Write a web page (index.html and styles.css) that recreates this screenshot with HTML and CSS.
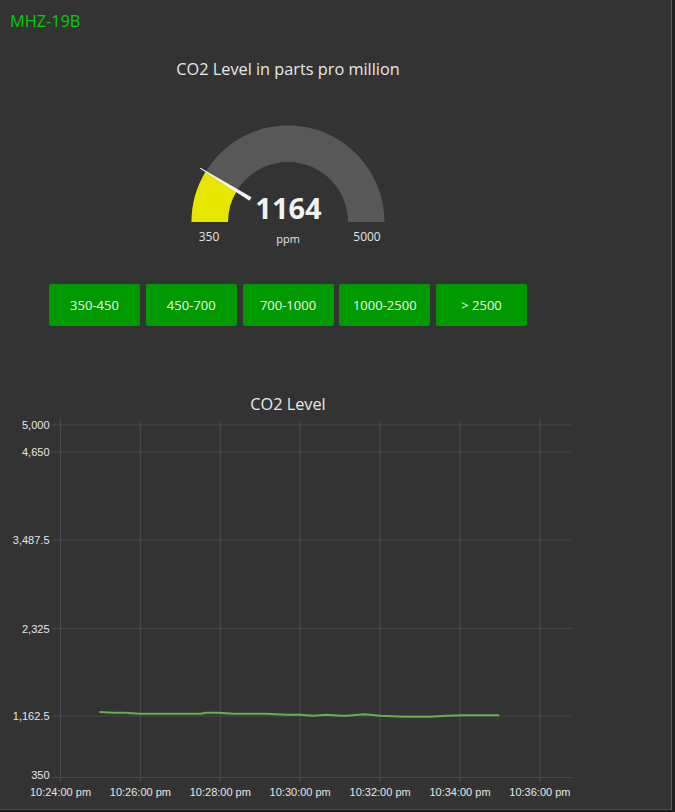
FILE: index.html
```html
<!DOCTYPE html>
<html lang="en">
<head>
<meta charset="utf-8">
<title>MHZ-19B</title>
<link rel="stylesheet" href="styles.css">
</head>
<body>
<div class="page">
  <header class="header">MHZ-19B</header>
  <main class="column">
    <section class="gauge-card">
      <h2 class="card-title gauge-title">CO2 Level in parts pro million</h2>
      <svg class="gauge" width="220" height="205" viewBox="0 0 220 205">
        <path d="M 13.5 143 A 96.5 96.5 0 0 1 206.5 143 L 170 143 A 60 60 0 0 0 50 143 Z" fill="#585858"/>
        <path d="M 13.5 143 A 96.5 96.5 0 0 1 27.72 92.58 L 58.84 111.65 A 60 60 0 0 0 50 143 Z" fill="#e6e600"/>
        <polygon points="22.44,88.75 73.54,118.31 71.45,121.72 21.92,89.61" fill="#f4f4f4"/>
        <text class="g-value" x="110.5" y="140" text-anchor="middle">1164</text>
        <text class="g-limit" x="31" y="162" text-anchor="middle">350</text>
        <text class="g-limit" x="189" y="162" text-anchor="middle">5000</text>
        <text class="g-unit" x="110" y="163.5" text-anchor="middle">ppm</text>
      </svg>
      <div class="buttons">
        <button class="range-btn">350-450</button>
        <button class="range-btn">450-700</button>
        <button class="range-btn">700-1000</button>
        <button class="range-btn">1000-2500</button>
        <button class="range-btn">&gt; 2500</button>
      </div>
    </section>
    <section class="chart-card">
      <h2 class="card-title chart-title">CO2 Level</h2>
      <svg class="chart" width="576" height="395" viewBox="0 0 576 395">
        <g class="grid">
          <line x1="52" y1="11" x2="571" y2="11"/>
          <line x1="52" y1="38" x2="571" y2="38"/>
          <line x1="52" y1="126" x2="571" y2="126"/>
          <line x1="52" y1="214.5" x2="571" y2="214.5"/>
          <line x1="52" y1="302" x2="571" y2="302"/>
          <line x1="52" y1="363.5" x2="571" y2="363.5"/>
          <line x1="60.5" y1="6" x2="60.5" y2="368"/>
          <line x1="140.4" y1="6" x2="140.4" y2="368"/>
          <line x1="220.3" y1="6" x2="220.3" y2="368"/>
          <line x1="300.2" y1="6" x2="300.2" y2="368"/>
          <line x1="380.1" y1="6" x2="380.1" y2="368"/>
          <line x1="460" y1="6" x2="460" y2="368"/>
          <line x1="539.9" y1="6" x2="539.9" y2="368"/>
        </g>
        <g class="y-labels">
          <text x="49.5" y="14.8">5,000</text>
          <text x="49.5" y="42">4,650</text>
          <text x="49.5" y="130">3,487.5</text>
          <text x="49.5" y="218.5">2,325</text>
          <text x="49.5" y="306">1,162.5</text>
          <text x="49.5" y="365">350</text>
        </g>
        <g class="x-labels">
          <text x="60.5" y="382.3">10:24:00 pm</text>
          <text x="140.4" y="382.3">10:26:00 pm</text>
          <text x="220.3" y="382.3">10:28:00 pm</text>
          <text x="300.2" y="382.3">10:30:00 pm</text>
          <text x="380.1" y="382.3">10:32:00 pm</text>
          <text x="460" y="382.3">10:34:00 pm</text>
          <text x="539.9" y="382.3">10:36:00 pm</text>
        </g>
        <polyline class="series" points="99.3,298 113.3,298.7 125,298.7 140,299.7 200,299.7 206.7,298.7 218.3,298.7 233.3,299.7 266.7,299.7 286.7,300.7 300,300.7 313.3,301.7 326.7,300.7 340,301.7 346.7,301.7 365,300.3 380,301.7 403.3,302.7 430,302.7 446.7,301.7 463.3,301.3 499.3,301.3"/>
      </svg>
    </section>
  </main>
</div>
</body>
</html>
```
FILE: styles.css
```css
html {
  background: #1e1e1e;
}
body {
  margin: 0;
  font-family: "Open Sans", "Noto Sans", sans-serif;
}
.page {
  width: 672px;
  height: 810px;
  box-sizing: border-box;
  background: #333333;
  border-right: 1px solid #5e5e5e;
  border-bottom: 1px solid #4a4a4a;
  overflow: hidden;
}
.header {
  padding: 11px 10px 0;
  height: 20px;
  line-height: 20px;
  font-size: 16.3px;
  color: #00cf00;
}
.column {
  width: 576px;
  display: flex;
  flex-direction: column;
}
.card-title {
  margin: 0;
  font-weight: normal;
  font-size: 16.3px;
  line-height: 20px;
  color: #e8e8e8;
  text-align: center;
}
.gauge-card {
  display: flex;
  flex-direction: column;
  align-items: center;
  padding-top: 28px;
}
.gauge {
  display: block;
}
.g-value {
  font-family: "Open Sans", sans-serif;
  font-weight: bold;
  font-size: 29px;
  fill: #f2f2f2;
}
.g-limit {
  font-family: "Open Sans", sans-serif;
  font-size: 12px;
  fill: #e4e4e4;
}
.g-unit {
  font-family: "Open Sans", sans-serif;
  font-size: 11px;
  fill: #e4e4e4;
}
.buttons {
  display: flex;
  gap: 5.75px;
  justify-content: center;
}
.range-btn {
  width: 91px;
  height: 42px;
  border: none;
  border-radius: 2px;
  background: #009a00;
  color: #eef8ea;
  font-family: "Open Sans", sans-serif;
  font-size: 13px;
  padding: 0;
}
.chart-card {
  display: flex;
  flex-direction: column;
  padding-top: 68px;
}
.chart {
  display: block;
}
.grid line {
  stroke: #4a4a4a;
  stroke-width: 1;
}
.y-labels text {
  font-family: "Liberation Sans", Arial, sans-serif;
  font-size: 11px;
  fill: #e6e6e6;
  text-anchor: end;
}
.x-labels text {
  font-family: "Liberation Sans", Arial, sans-serif;
  font-size: 11px;
  fill: #e6e6e6;
  text-anchor: middle;
}
.series {
  fill: none;
  stroke: #5fb348;
  stroke-width: 2;
  stroke-linejoin: round;
}
```
